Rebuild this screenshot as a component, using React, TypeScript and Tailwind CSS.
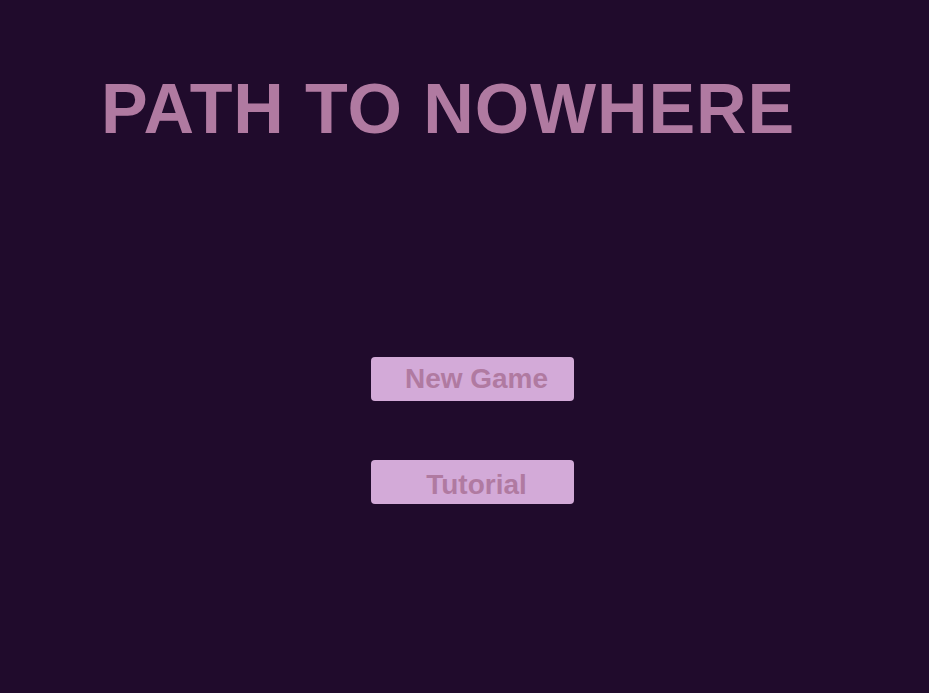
const MenuButton = ({ label, className = "" }: { label: string; className?: string }) => {
  return (
    <button
      className={`w-[203px] h-[44px] rounded-[4px] bg-[#d3aad8] pl-2 text-[28px] font-bold leading-none text-[#b07aa1] flex items-center justify-center ${className}`}
    >
      {label}
    </button>
  );
};

export default function App() {
  return (
    <main
      className="w-full h-[693px] bg-[#200b2c] overflow-hidden"
      style={{ fontFamily: '"Liberation Sans", Arial, sans-serif' }}
    >
      <h1 className="pt-[74px] pl-[101px] text-[70px] font-bold leading-[70px] tracking-[0.9px] text-[#b07aa1]">
        PATH TO NOWHERE
      </h1>
      <div className="mt-[213px] pl-[371px] flex flex-col gap-[59px]">
        <MenuButton label="New Game" />
        <MenuButton label="Tutorial" className="pt-[5px]" />
      </div>
    </main>
  );
}
